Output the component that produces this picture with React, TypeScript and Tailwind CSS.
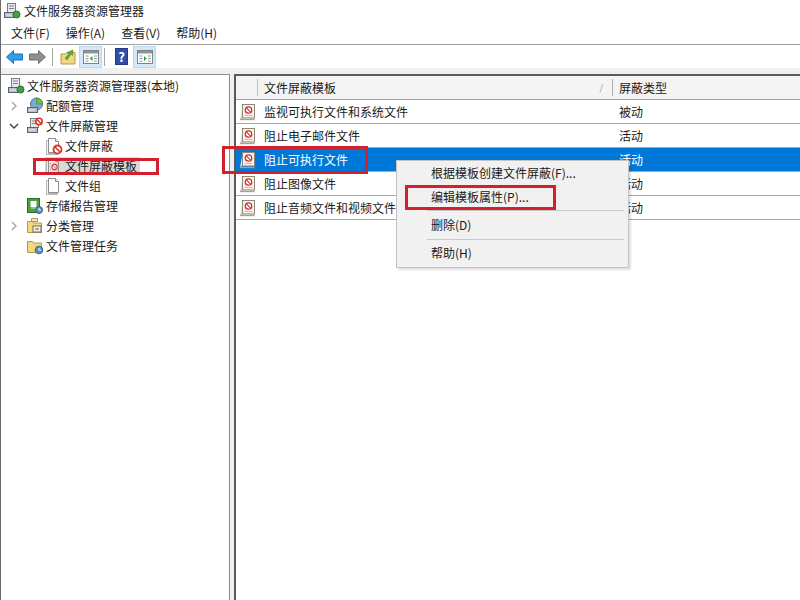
import type { ReactNode } from "react";

function ServerIcon({ badge }: { badge: "green" | "pie" | "block" }) {
  return (
    <svg width="18" height="18" viewBox="0 0 18 18" className="shrink-0">
      {badge === "pie" ? (
        <>
          <circle cx="10.5" cy="7" r="6" fill="#7ea9d6" stroke="#4d6f96" />
          <path d="M10.5 7 L10.5 1 A6 6 0 0 1 16.5 7 Z" fill="#6cc04a" stroke="#3d8a2a" strokeWidth="0.6" />
        </>
      ) : (
        <rect x="4.5" y="1.5" width="8" height="9" fill="#e6e8ea" stroke="#767f88" />
      )}
      {badge !== "pie" && <path d="M6 4h5M6 6.5h5" stroke="#7a838c" />}
      <rect x="1.5" y="10.5" width="10" height="5" fill="#b9c0c7" stroke="#59636d" />
      <path d="M3 13h6" stroke="#eef0f2" />
      {badge === "green" && <circle cx="13.5" cy="12.5" r="3.5" fill="#43a047" stroke="#2c7031" />}
      {badge === "block" && (
        <>
          <circle cx="13" cy="4.5" r="3.2" fill="#fff" stroke="#d8342c" strokeWidth="1.6" />
          <path d="M11 2.6 L15 6.4" stroke="#d8342c" strokeWidth="1.4" />
        </>
      )}
    </svg>
  );
}

function PageIcon({ block }: { block?: "big" | "small" }) {
  return (
    <svg width="18" height="18" viewBox="0 0 18 18" className="shrink-0">
      <path d="M1.5 3.5h2v13h9v1h-11z" fill="#f3f3f3" stroke="#a5a5a5" strokeWidth="0.8" />
      <path d="M3.5 1.5h7l3 3v11h-10z" fill="#fff" stroke="#8e8e8e" />
      <path d="M10.5 1.5v3h3" fill="#eee" stroke="#8e8e8e" />
      {block === "big" && (
        <>
          <circle cx="12.5" cy="12.5" r="4" fill="#fff" stroke="#d7332b" strokeWidth="1.8" />
          <path d="M10 10 L15 15" stroke="#d7332b" strokeWidth="1.6" />
        </>
      )}
      {block === "small" && (
        <>
          <rect x="5" y="6" width="8" height="8" fill="#f6e3e3" stroke="#b9a0a0" strokeWidth="0.6" />
          <circle cx="9.5" cy="10" r="2.6" fill="#fff" stroke="#cf3a33" strokeWidth="1.1" />
          <path d="M8 8.5 L11 11.5" stroke="#cf3a33" />
        </>
      )}
    </svg>
  );
}

function ReportIcon() {
  return (
    <svg width="18" height="18" viewBox="0 0 18 18" className="shrink-0">
      <rect x="1.5" y="1.5" width="12" height="14" fill="#4ba03e" stroke="#2b6d27" />
      <rect x="4.5" y="4" width="6" height="6" fill="#fff" />
      <path d="M5 11h5" stroke="#d8efd2" />
      <circle cx="13" cy="13" r="3.5" fill="#5d8fb8" stroke="#3d6585" />
      <path d="M13 11v2h2" stroke="#fff" fill="none" />
    </svg>
  );
}

function FolderIcon({ variant }: { variant: "class" | "task" }) {
  return (
    <svg width="18" height="18" viewBox="0 0 18 18" className="shrink-0">
      {variant === "class" && <path d="M5.5 1.5h6v3h-6z" fill="#f5e7b5" stroke="#a59a6c" />}
      <path d="M1.5 4.5h5l1 1.5h8v9.5h-14z" fill="#f4d77e" stroke="#b59a4d" />
      {variant === "class" ? (
        <>
          <rect x="7" y="9" width="8" height="6" fill="#f7f4e8" stroke="#6e6e5c" />
          <path d="M9 12h4" stroke="#555" />
        </>
      ) : (
        <>
          <circle cx="13" cy="13" r="3.8" fill="#5b93b5" stroke="#3a6a85" />
          <path d="M13 11v2h2" stroke="#fff" fill="none" />
        </>
      )}
    </svg>
  );
}

function TemplateIcon() {
  return (
    <svg width="18" height="18" viewBox="0 0 18 18" className="shrink-0">
      <path d="M1 16.5 L3.5 14V2.5" fill="#e6e2d8" stroke="#b5b0a5" />
      <path d="M1 16.5h14.5" stroke="#a8a297" strokeWidth="1.4" />
      <rect x="3.5" y="1.5" width="12" height="13.5" fill="#f7eeee" stroke="#8e8878" />
      <circle cx="9.5" cy="7" r="3.2" fill="#fff" stroke="#cf3029" strokeWidth="1.3" />
      <path d="M7.4 4.9 L11.6 9.1" stroke="#cf3029" strokeWidth="1.1" />
      <path d="M5.5 12.5h8" stroke="#c9c2b4" />
    </svg>
  );
}

function ArrowIcon({ dir, color, edge }: { dir: "left" | "right"; color: string; edge: string }) {
  return (
    <svg width="17" height="16" viewBox="0 0 17 16">
      <path
        d={dir === "left" ? "M0.5 8 L7.5 1.5V5h9v6h-9v3.5z" : "M16.5 8 L9.5 1.5V5H0.5v6h9v3.5z"}
        fill={color}
        stroke={edge}
      />
    </svg>
  );
}

function PaneIcon({ arrow }: { arrow: "left" | "right" }) {
  return (
    <svg width="16" height="14" viewBox="0 0 16 14">
      <rect x="0.5" y="0.5" width="15" height="13" fill="#fff" stroke="#7d8489" />
      <rect x="1" y="1" width="14" height="2.5" fill="#8d959b" />
      <path d="M2.5 6h3M2.5 8.5h3M2.5 11h3M11 6h3M11 8.5h3M11 11h3" stroke="#8d959b" />
      <path d={arrow === "left" ? "M9.5 6v5L6.8 8.5z" : "M7 6v5l2.7-2.5z"} fill="#2f9e44" />
    </svg>
  );
}

function ToolButton({ children }: { children: ReactNode }) {
  return (
    <div className="flex h-[22px] w-[23px] items-center justify-center border border-[#b8d8f2] bg-[#d5e8f8]">
      {children}
    </div>
  );
}

function Chevron({ open }: { open?: boolean }) {
  return (
    <svg width="10" height="10" viewBox="0 0 10 10" className="shrink-0">
      {open ? (
        <path d="M1 3 L5 7 L9 3" fill="none" stroke="#404040" strokeWidth="1.4" />
      ) : (
        <path d="M3 1 L7 5 L3 9" fill="none" stroke="#a6a6a6" strokeWidth="1.4" />
      )}
    </svg>
  );
}

function TreeRow({
  indent,
  chevron,
  icon,
  label,
  selected,
}: {
  indent: string;
  chevron?: "open" | "closed";
  icon: ReactNode;
  label: string;
  selected?: boolean;
}) {
  return (
    <div className={`flex h-5 items-center ${indent}`}>
      {chevron && (
        <div className="flex w-[17px] justify-start">
          <Chevron open={chevron === "open"} />
        </div>
      )}
      <div className={selected ? "flex items-center bg-[#d9d9d9] pr-[3px]" : "flex items-center"}>
        {icon}
        <span className="pl-[2px]">{label}</span>
      </div>
    </div>
  );
}

const rows = [
  { name: "监视可执行文件和系统文件", type: "被动" },
  { name: "阻止电子邮件文件", type: "活动" },
  { name: "阻止可执行文件", type: "活动", selected: true },
  { name: "阻止图像文件", type: "活动" },
  { name: "阻止音频文件和视频文件", type: "活动" },
];

export default function App() {
  return (
    <div
      className="relative flex h-[600px] w-[800px] flex-col overflow-hidden border-l border-[#6b6b6b] bg-white text-[12px] text-[#1a1a1a]"
      style={{ fontFamily: '"Noto Sans CJK SC", "Liberation Sans", sans-serif' }}
    >
      <div className="flex h-[22px] items-center gap-[3px] pl-[2px]">
        <ServerIcon badge="green" />
        <span>文件服务器资源管理器</span>
      </div>

      <div className="flex h-[23px] items-center gap-[16px] border-b border-[#a0a0a0] pl-[10px]">
        <span>文件(F)</span>
        <span>操作(A)</span>
        <span>查看(V)</span>
        <span>帮助(H)</span>
      </div>

      <div className="flex h-[23px] items-center bg-white pl-[5px]">
        <ArrowIcon dir="left" color="#2f9fe8" edge="#1c6fb3" />
        <div className="ml-[6px]">
          <ArrowIcon dir="right" color="#8f8f8f" edge="#6f6f6f" />
        </div>
        <div className="ml-[6px] mr-[7px] h-[18px] w-px bg-[#a8a8a8]" />
        <svg width="16" height="16" viewBox="0 0 16 16" className="mr-[3px]">
          <path d="M1 5h5l1-1.5h8V15H1z" fill="#f3d684" stroke="#b59a4d" />
          <path d="M5 9 L9 5 L7 3.5 L13 1 L12.5 6.5 L11 5 L7 11z" fill="#5cb02e" stroke="#3d7f1d" strokeWidth="0.5" />
        </svg>
        <ToolButton>
          <PaneIcon arrow="left" />
        </ToolButton>
        <div className="ml-[2px] mr-[10px] h-[18px] w-px bg-[#a8a8a8]" />
        <div className="mr-[5px] flex h-[17px] w-[13px] items-center justify-center border border-[#1f3a8a] bg-[#2f4fa8] text-[13px] leading-none font-bold text-white">
          ?
        </div>
        <ToolButton>
          <PaneIcon arrow="right" />
        </ToolButton>
      </div>

      <div className="flex min-h-0 flex-1 flex-col bg-[#f0f0f0] pt-[6px]">
        <div className="flex min-h-0 flex-1">
          <div className="w-[229px] shrink-0 border-r border-t border-[#8c8c8c] bg-white pt-[1px] pl-[3px]">
            <TreeRow indent="pl-[3px]" icon={<ServerIcon badge="green" />} label="文件服务器资源管理器(本地)" />
            <TreeRow indent="pl-[5px]" chevron="closed" icon={<ServerIcon badge="pie" />} label="配额管理" />
            <TreeRow indent="pl-[5px]" chevron="open" icon={<ServerIcon badge="block" />} label="文件屏蔽管理" />
            <TreeRow indent="pl-[41px]" icon={<PageIcon block="big" />} label="文件屏蔽" />
            <TreeRow indent="pl-[41px]" icon={<PageIcon block="small" />} label="文件屏蔽模板" selected />
            <TreeRow indent="pl-[41px]" icon={<PageIcon />} label="文件组" />
            <TreeRow indent="pl-[22px]" icon={<ReportIcon />} label="存储报告管理" />
            <TreeRow indent="pl-[5px]" chevron="closed" icon={<FolderIcon variant="class" />} label="分类管理" />
            <TreeRow indent="pl-[22px]" icon={<FolderIcon variant="task" />} label="文件管理任务" />
          </div>

          <div className="ml-[4px] flex min-w-0 flex-1 flex-col border-l-2 border-t-2 border-[#5a5a5a] bg-white">
            <div className="flex h-[24px] shrink-0 items-center border-b border-[#a0a0a0] bg-[#f4f4f4]">
              <div className="h-[17px] w-[22px] border-r border-[#c0c0c0]" />
              <div className="flex h-[17px] w-[355px] items-center justify-between border-r border-[#b0b0b0] pl-[6px] pr-[9px]">
                <span>文件屏蔽模板</span>
                <span className="text-[9px] text-[#909090]">/</span>
              </div>
              <span className="pl-[6px]">屏蔽类型</span>
            </div>
            {rows.map((row) => (
              <div
                key={row.name}
                className={
                  row.selected
                    ? "flex h-[24px] shrink-0 items-center border-b border-[#a8a8a8] bg-[#0078d7] text-white"
                    : "flex h-[24px] shrink-0 items-center border-b border-[#a8a8a8]"
                }
              >
                <div className="flex w-[28px] justify-start pl-[3px]">
                  <TemplateIcon />
                </div>
                <span className="w-[355px]">{row.name}</span>
                <span>{row.type}</span>
              </div>
            ))}
          </div>
        </div>
      </div>

      {/* right click menu */}
      <div className="absolute left-[395px] top-[160px] flex h-[108px] w-[233px] flex-col border border-[#c4c4c4] bg-[#f1f1f1] px-[4px] shadow-[2px_2px_2px_rgba(0,0,0,0.12)]">
        <div className="flex h-[24px] items-center pl-[30px]">根据模板创建文件屏蔽(F)...</div>
        <div className="flex h-[23px] items-center pl-[30px]">编辑模板属性(P)...</div>
        <div className="my-[2px] ml-[26px] h-px bg-[#c8c8c8]" />
        <div className="flex h-[24px] items-center pl-[30px]">删除(D)</div>
        <div className="my-[2px] ml-[26px] h-px bg-[#c8c8c8]" />
        <div className="flex h-[22px] items-center pl-[30px]">帮助(H)</div>
      </div>

      {/* red callouts */}
      <div className="absolute left-[32px] top-[158px] h-[17px] w-[126px] border-[3px] border-[#d4202c]" />
      <div className="absolute left-[221px] top-[146px] h-[28px] w-[146px] border-[3px] border-[#d4202c]" />
      <div className="absolute left-[404px] top-[185px] h-[25px] w-[151px] border-[3px] border-[#d4202c]" />
    </div>
  );
}
